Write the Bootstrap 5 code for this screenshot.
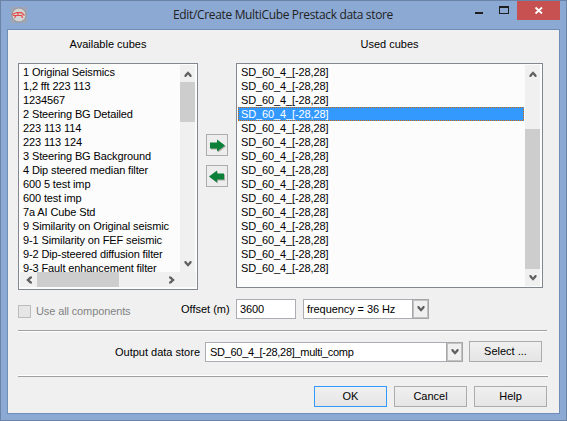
<!DOCTYPE html>
<html lang="en">
<head>
<meta charset="utf-8">
<meta name="viewport" content="width=device-width, initial-scale=1">
<title>Edit/Create MultiCube Prestack data store</title>
<link href="https://cdn.jsdelivr.net/npm/bootstrap@5.3.0/dist/css/bootstrap.min.css" rel="stylesheet">
<style>
body{font:11px/14px "Liberation Sans",Arial,sans-serif;color:#000;background:#8ca9d4}
svg{display:block;flex:none}
.window{width:567px;height:421px;border:1px solid #6c83a8;background:#8ca9d4;padding:0 6px 6px}
.titlebar{height:28px}
.appicon{margin:6px 0 0 4px}
.caption-text{font:12px/18px "Open Sans","Noto Sans",sans-serif;color:#222;width:222px;margin:5px 0 0 146px;letter-spacing:-.34px}
.winbtns{width:86px;height:20px}
.closebtn{width:43px;height:19px;background:#c75050;margin-left:auto}
.client{width:553px;height:385px;background:#f0f0f0;border:1px solid #708db8;padding:0 0 0 10px}
.heads{height:33px;padding-top:7px}
.listpane{background:#fcfcfc;border:1px solid #828790;padding:1px}
.avail{width:180px;height:227px}
.used{width:307px;height:225px}
.rows{overflow:hidden;min-width:0;letter-spacing:-.12px}
.rows div{height:14px;white-space:nowrap;padding-left:3px}
.rows .picked{color:#fff;margin-right:1px;background:
repeating-linear-gradient(90deg,#cc6600 0 1px,#3399ff 1px 2px) 0 0/100% 1px no-repeat,
repeating-linear-gradient(90deg,#cc6600 0 1px,#3399ff 1px 2px) 0 100%/100% 1px no-repeat,
repeating-linear-gradient(#cc6600 0 1px,#3399ff 1px 2px) 0 0/1px 100% no-repeat,
repeating-linear-gradient(#cc6600 0 1px,#3399ff 1px 2px) 100% 0/1px 100% no-repeat,#3399ff}
.vbar{width:15px;background:#f0f0f0;flex:none;margin-right:1px}
.vbar .endcap,.hbar .endcap{width:15px;height:17px}
.hbar .endcap{width:17px;height:15px}
.hbar{height:15px;background:#f0f0f0;margin-bottom:1px}
.thumb{background:#cdcdcd}
.between{width:38px;padding:71px 0 0 8px}
.movebtn{width:22px;height:22px;border:1px solid #acacac;background:#ededed;padding:0;border-radius:0}
.field{background:#fff;border:1px solid #abadb3;height:20px;white-space:nowrap;letter-spacing:-.08px}
.dropcap{width:17px;height:20px;border:1px solid #a6a6a8;background:#f0f0f0;margin:-1px -1px -1px 0;box-shadow:inset 0 0 0 1px #c2c2c4}
.pushbtn{width:73px;height:21px;border:1px solid #acacac;border-radius:0;background:linear-gradient(#f0f0f0,#e5e5e5);font-size:11px;line-height:19px;padding:0;color:#000}
.pushbtn.default{border-color:#3399ff}
.tick{width:13px;height:13px;border:1px solid #bcbcbc;background:#e6e6e6}
.rule{height:2px;width:529px;background:linear-gradient(#a0a0a0 50%,#fff 50%)}
.rule.flip{background:linear-gradient(#fff 50%,#a0a0a0 50%);width:530px}
</style>
<script src="https://cdn.jsdelivr.net/npm/bootstrap@5.3.0/dist/js/bootstrap.bundle.min.js"></script>
</head>
<body>
<svg width="0" height="0" class="position-absolute">
<defs>
<path id="down" d="M.5 1v2L4 6.800 7.500 3V1H6L4 3.500 2 1z" fill="#606060"/>
<path id="go" d="M1 4.500h7V1.500l8 6L8 13.500v-3H1z"/>
</defs>
</svg>
<main class="window">
<header class="titlebar d-flex align-items-start">
<svg class="appicon" width="16" height="16" viewBox="0 0 16 16"><rect width="16" height="16" fill="#a0a6b4"/><circle cx="8" cy="8" r="7" fill="#d5d4d4" stroke="#888b92" stroke-width=".8"/><path d="M1 7.500L5.500 5.500l5 .2 3 2.800M2 8.500h9M5.500 8L3.500 11M10.500 8l1 3M7 6v2" fill="none" stroke="#e34b48" stroke-width="1.200"/></svg>
<div class="caption-text text-nowrap">Edit/Create MultiCube Prestack data store</div>
<div class="winbtns d-flex ms-auto">
<svg width="43" height="19" viewBox="0 0 43 19"><path d="M1 11h8v2H1z" fill="#1e1e1e"/><path d="M25 5h10v8H25zM26 7v5h8V7z" fill="#1e1e1e" fill-rule="evenodd"/></svg>
<div class="closebtn"><svg width="43" height="19" viewBox="0 0 43 19"><path d="M18.500 6.500l6.500 6M25 6.500l-6.500 6" stroke="#fff" stroke-width="1.800"/></svg></div>
</div>
</header>
<section class="client">
<div class="heads d-flex text-center"><div style="width:180px">Available cubes</div><div style="width:38px"></div><div style="width:307px">Used cubes</div></div>
<div class="d-flex align-items-start">
<div class="listpane avail d-flex flex-column">
<div class="d-flex flex-grow-1 overflow-hidden">
<div class="rows flex-grow-1">
<div>1 Original Seismics</div><div>1,2 fft 223 113</div><div>1234567</div><div>2 Steering BG Detailed</div><div>223 113 114</div><div>223 113 124</div><div>3 Steering BG Background</div><div>4 Dip steered median filter</div><div>600 5 test imp</div><div>600 test imp</div><div>7a AI Cube Std</div><div>9 Similarity on Original seismic</div><div>9-1 Similarity on FEF seismic</div><div>9-2 Dip-steered diffusion filter</div><div>9-3 Fault enhancement filter</div>
</div>
<div class="vbar d-flex flex-column">
<div class="endcap d-flex align-items-center justify-content-center"><svg width="8" height="8"><use href="#down" transform="rotate(180 4 4)"/></svg></div>
<div class="thumb" style="height:40px"></div>
<div class="endcap mt-auto d-flex align-items-center justify-content-center"><svg width="8" height="8"><use href="#down"/></svg></div>
</div>
</div>
<div class="hbar d-flex">
<div class="endcap d-flex align-items-center justify-content-center"><svg width="8" height="8"><use href="#down" transform="rotate(90 4 4)"/></svg></div>
<div class="thumb" style="width:82px"></div>
<div class="endcap ms-auto me-3 d-flex align-items-center justify-content-center"><svg width="8" height="8"><use href="#down" transform="rotate(-90 4 4)"/></svg></div>
</div>
</div>
<div class="between d-flex flex-column">
<button class="movebtn" aria-label="Add"><svg width="20" height="20" viewBox="0 0 20 20"><use href="#go" x="3" y="4" fill="#a9a9a2"/><use href="#go" x="2" y="3" fill="#0c8038"/></svg></button>
<button class="movebtn" style="margin-top:9px" aria-label="Remove"><svg width="20" height="20" viewBox="0 0 20 20"><use href="#go" transform="translate(19 4) scale(-1 1)" fill="#a9a9a2"/><use href="#go" transform="translate(18 3) scale(-1 1)" fill="#0c8038"/></svg></button>
</div>
<div class="listpane used d-flex">
<div class="rows flex-grow-1">
<div>SD_60_4_[-28,28]</div><div>SD_60_4_[-28,28]</div><div>SD_60_4_[-28,28]</div><div class="picked">SD_60_4_[-28,28]</div><div>SD_60_4_[-28,28]</div><div>SD_60_4_[-28,28]</div><div>SD_60_4_[-28,28]</div><div>SD_60_4_[-28,28]</div><div>SD_60_4_[-28,28]</div><div>SD_60_4_[-28,28]</div><div>SD_60_4_[-28,28]</div><div>SD_60_4_[-28,28]</div><div>SD_60_4_[-28,28]</div><div>SD_60_4_[-28,28]</div><div>SD_60_4_[-28,28]</div>
</div>
<div class="vbar d-flex flex-column">
<div class="endcap d-flex align-items-center justify-content-center"><svg width="8" height="8"><use href="#down" transform="rotate(180 4 4)"/></svg></div>
<div class="thumb mt-auto" style="height:140px"></div>
<div class="endcap d-flex align-items-center justify-content-center"><svg width="8" height="8"><use href="#down"/></svg></div>
</div>
</div>
</div>
<div class="d-flex align-items-center" style="height:20px;margin-top:9px">
<div class="tick mt-1"></div><div class="text-nowrap" style="margin:4px 0 0 5px;color:#838383;width:145px;letter-spacing:-.12px">Use all components</div>
<div class="text-nowrap" style="width:55px">Offset (m)</div>
<div class="field" style="width:60px;padding:2px 3px">3600</div>
<div class="field d-flex" style="width:126px;margin-left:7px"><span class="flex-grow-1" style="padding:2px 3px">frequency = 36 Hz</span><span class="dropcap d-flex align-items-center justify-content-center"><svg width="8" height="8"><use href="#down"/></svg></span></div>
</div>
<div class="rule" style="margin-top:11px"></div>
<div class="d-flex" style="margin-top:9px;height:21px">
<div class="text-end text-nowrap" style="width:182px;padding-top:4px">Output data store</div>
<div class="field d-flex" style="width:258px;margin:1px 6px 0 5px"><span class="flex-grow-1" style="padding:2px 4px;letter-spacing:-.3px">SD_60_4_[-28,28]_multi_comp</span><span class="dropcap d-flex align-items-center justify-content-center"><svg width="8" height="8"><use href="#down"/></svg></span></div>
<button class="btn pushbtn">Select ...</button>
</div>
<div class="rule flip" style="margin-top:13px"></div>
<div class="d-flex" style="gap:7px;margin:9px 0 0 296px">
<button class="btn pushbtn default">OK</button><button class="btn pushbtn">Cancel</button><button class="btn pushbtn">Help</button>
</div>
</section>
</main>
</body>
</html>
